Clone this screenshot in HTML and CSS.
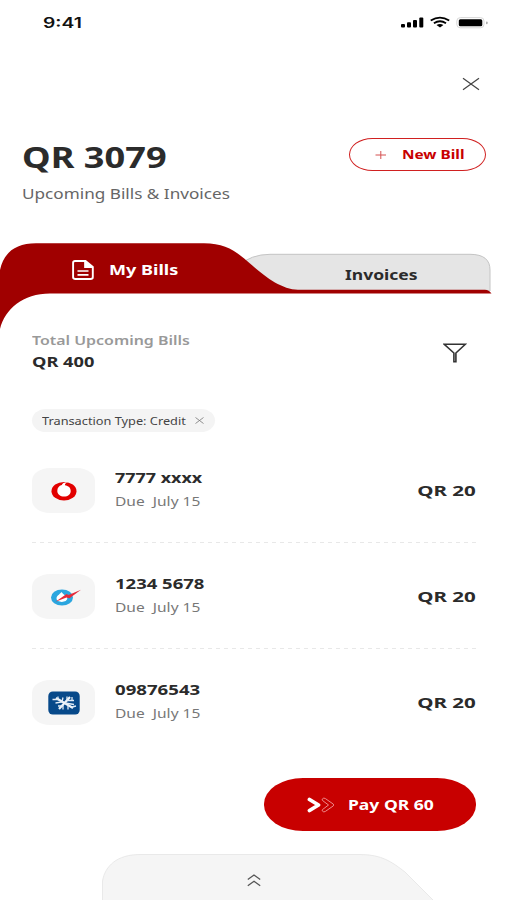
FILE: index.html
```html
<!DOCTYPE html>
<html lang="en">
<head>
<meta charset="utf-8">
<title>Bills</title>
<link rel="stylesheet" href="styles.css">
</head>
<body>
<main class="app">
  <header class="status">
    <span class="t time">9:41</span>
    <svg class="status-icons" width="88" height="16" viewBox="0 0 88 16">
      <rect x="1" y="9" width="4" height="3.6" rx="1"/><rect x="7" y="7.2" width="4" height="5.4" rx="1"/><rect x="13" y="5" width="4" height="7.6" rx="1"/><rect x="19.3" y="2.6" width="4" height="10" rx="1"/>
      <path d="M30.7 5.6Q40 -.2 49.2 5.6M33.9 8.2Q40 4.3 46 8.2" fill="none" stroke="#000" stroke-width="1.8"/>
      <path d="M36.5 10.1Q40 7.9 43.4 10.1L40 12.5Z"/>
      <rect x="56.8" y="2.6" width="27.2" height="10.2" rx="3.5" fill="#fff" stroke="#d8d8d8"/>
      <rect x="58.8" y="4.2" width="23.5" height="7.1" rx="1.5"/><rect x="86" y="6.5" width="1.6" height="2.8" rx=".8" fill="#aaa"/>
    </svg>
  </header>
  <div class="close">
    <svg width="18" height="14" viewBox="0 0 18 14"><path d="M1 1.2L17 12.8M17 1.2L1 12.8" fill="none" stroke="#444" stroke-width="1.2"/></svg>
  </div>
  <section class="summary">
    <div>
      <h1 class="t total">QR 3079</h1>
      <p class="t subtitle">Upcoming Bills &amp; Invoices</p>
    </div>
    <button class="new-bill">
      <svg width="12" height="8" viewBox="0 0 12 8"><path d="M.5 4H11M5.800 0V8" fill="none" stroke="#d45050"/></svg>
      <span class="t new-label">New Bill</span>
    </button>
  </section>
  <nav class="tabs">
    <svg class="tabs-shape" width="507" height="88" viewBox="0 0 507 88">
      <path d="M238 48V23Q251 11.300 270 11.300H470C484 11.300 490 17 490 27V48Z" fill="#e5e5e5" stroke="#c4c4c4"/>
      <path d="M0 27C4 9 16 .3 36 .3H204C226 .3 237 9 250 20.500C263 32 281 46.700 298 46.700H485Q489 46.700 491.500 50.500H50C23 50.500 5 66 0 86Z" fill="#a00000"/>
    </svg>
    <a class="tab tab-bills">
      <svg width="22" height="20" viewBox="0 0 22 20"><path d="M3 1H13.500L20.800 7V17.300Q20.800 19 18.500 19H3.300Q1.100 19 1.100 17.300V2.700Q1.100 1 3 1Z" fill="none" stroke="#fff" stroke-width="1.900"/><path d="M13 1L20.800 7.200H13Z" fill="#fff"/><path d="M13 1V7.200H20.500M5.500 11H16.500M5.500 14.800H16.500" fill="none" stroke="#fff" stroke-width="1.700"/></svg>
      <span class="t bills-label">My Bills</span>
    </a>
    <a class="tab tab-invoices"><span class="t inv-label">Invoices</span></a>
  </nav>
  <section class="upcoming">
    <div>
      <p class="t up-label">Total Upcoming Bills</p>
      <p class="t up-value">QR 400</p>
    </div>
    <svg class="filter" width="24" height="20" viewBox="0 0 24 20"><path d="M1.300 1.300H22.300L12.900 10V18.700H10.900V10Z" fill="none" stroke="#333" stroke-width="1.600"/></svg>
  </section>
  <div class="chip">
    <span class="t chip-label">Transaction Type: Credit</span>
    <svg width="9" height="7" viewBox="0 0 9 7"><path d="M.5 .5L8.500 6.500M8.500 .5L.5 6.500" fill="none" stroke="#777" stroke-width=".8"/></svg>
  </div>
  <ul class="bills">
    <li class="bill">
      <span class="logo">
        <svg width="26" height="20" viewBox="0 0 26 20"><ellipse cx="13" cy="10.200" rx="12.500" ry="9.300" fill="#e20000"/><path d="M16.500 1.200C13 1.300 11.200 2.500 10.800 4C7.800 4.800 6.300 7 6.300 9.900C6.300 13.400 9.500 15.500 13 15.500C17 15.500 19.700 13.300 19.700 9.900C19.700 6.800 17.300 4.900 13.900 4.300C13.900 2.900 14.800 1.900 16.500 1.200Z" fill="#fff"/></svg>
      </span>
      <div class="info"><p class="t name n1">7777 xxxx</p><p class="t due">Due&nbsp; July 15</p></div>
      <span class="t amount">QR 20</span>
    </li>
    <li class="bill">
      <span class="logo">
        <svg class="water" width="32" height="18" viewBox="0 0 32 18"><ellipse cx="12" cy="9.500" rx="11" ry="8" fill="#2ba6df"/><path d="M11.500 4C9.200 6.800 6.500 8 6.500 10.600C6.500 12.800 8.800 13.900 11.800 13.900S17.300 12.500 17.300 10.300C17.300 8 13.500 7 11.500 4Z" fill="#fff"/><path d="M5.500 13.800L16.500 6L18.500 7L31 1.700L19.500 10.200L16.500 9.400Z" fill="#e52b3a"/></svg>
      </span>
      <div class="info"><p class="t name n2">1234 5678</p><p class="t due">Due&nbsp; July 15</p></div>
      <span class="t amount">QR 20</span>
    </li>
    <li class="bill">
      <span class="logo">
        <svg width="32" height="24" viewBox="0 0 32 24"><rect x=".3" y=".5" width="31.400" height="23" rx="4.500" fill="#07498a"/><path d="M8 7L25 17M11 18L22 6" fill="none" stroke="#f0f5fa" stroke-width="2.200"/><path d="M4.500 8.500H10V5.500M7.500 12L14 11L15 6.500M19 5.500V9.500H26M10 15H15V18.500M17 12L26 13.500M20 14V18.500M24 16L28 15M24 6V9" fill="none" stroke="#e1ebf5" stroke-width="1.300"/></svg>
      </span>
      <div class="info"><p class="t name n3">09876543</p><p class="t due">Due&nbsp; July 15</p></div>
      <span class="t amount">QR 20</span>
    </li>
  </ul>
  <button class="pay">
    <svg width="28" height="16" viewBox="0 0 28 16"><path d="M2.500 2.500L11.500 8L2.500 13.500" fill="none" stroke="#fff" stroke-width="3.800" stroke-linecap="round" stroke-linejoin="round"/><path d="M15.200 2.200Q16.800 .2 18.400 1.600L26.300 7.100Q27 8 26.300 8.900L18.400 14.400Q16.800 15.800 15.200 13.800Q14.800 12.900 16 12.200L21.500 8L16 3.900Q14.800 3.100 15.200 2.200Z" fill="none" stroke="#f29a9a" stroke-width=".9"/></svg>
    <span class="t pay-label">Pay QR 60</span>
  </button>
  <footer class="drawer">
    <svg width="333" height="47" viewBox="0 0 333 47"><path d="M.5 47V27C3 12 15 .5 38 .5H258C280 .5 290 8 303 18L332 47Z" fill="#f5f5f5" stroke="#e5e5e5" stroke-width=".8"/><path d="M145.800 25.500L152 21L158.200 25.500M145.800 31.700L152 27.200L158.200 31.700" fill="none" stroke="#555" stroke-width="1.300"/></svg>
  </footer>
</main>
</body>
</html>
```
FILE: styles.css
```css
* { box-sizing: border-box; margin: 0; padding: 0; }
body { background: #fff; color: #2b2b2b; font-family: "Noto Sans", "Open Sans", sans-serif; }
svg { display: block; flex: none; }
button { border: 0; font: inherit; }
.app { width: 507px; height: 900px; overflow: hidden; display: flex; flex-direction: column; }
.t { display: block; width: max-content; white-space: nowrap; transform-origin: left center; transform: scaleX(var(--sx, 1.25)); }
.status { height: 45px; padding: 0 19px 0 43px; display: flex; justify-content: space-between; align-items: center; flex: none; }
.time { font: 600 14.5px/20px "Inter", sans-serif; color: #111; --sx: 1.33; }
.status-icons { margin-top: 1px; }
.close { height: 93px; padding: 32px 27px 0 0; display: flex; justify-content: flex-end; flex: none; }
.summary { height: 105px; padding: 0 21px 0 22px; display: flex; justify-content: space-between; align-items: flex-start; flex: none; }
.total { font-size: 28.5px; line-height: 38px; font-weight: 700; --sx: 1.27; }
.subtitle { margin-top: 8px; font-size: 14px; line-height: 20px; color: #666; --sx: 1.225; }
.new-bill { width: 137px; height: 33px; border: 1.3px solid #d02020; border-radius: 24px / 17px; background: #fff; display: flex; align-items: center; gap: 15px; padding-left: 25px; color: #c80000; }
.new-label { font-size: 12.5px; font-weight: 700; line-height: 18px; --sx: 1.23; }
.tabs { position: relative; height: 88px; display: flex; flex: none; }
.tabs-shape { position: absolute; left: 0; top: 0; }
.tab { position: relative; display: flex; align-items: center; font-weight: 700; font-size: 14px; line-height: 20px; }
.tab-bills { width: 250px; height: 53px; padding-left: 72px; gap: 15px; color: #fff; --sx: 1.29; }
.tab-invoices { height: 64px; padding-left: 95px; }
.upcoming { height: 78px; padding: 0 40px 0 32px; display: flex; justify-content: space-between; flex: none; }
.up-label { font-size: 13px; line-height: 18px; font-weight: 600; color: #999; --sx: 1.225; }
.up-value { margin-top: 4px; font-size: 13.5px; line-height: 18px; font-weight: 700; --sx: 1.35; }
.filter { margin-top: 12px; }
.chip { width: 183px; height: 23px; margin-left: 32px; border-radius: 14px / 11.5px; background: #f4f4f4; display: flex; align-items: center; justify-content: space-between; padding: 0 11px 0 10px; flex: none; }
.chip-label { font-size: 10.5px; line-height: 16px; color: #444; --sx: 1.215; }
.bills { list-style: none; margin: 6px 31px 0 32px; height: 318px; flex: none; }
.bill { height: 106px; padding-bottom: 1px; display: flex; align-items: center; background: repeating-linear-gradient(90deg, #e8e8e8 0 4px, transparent 4px 8px) left bottom 1px / 100% 1px no-repeat; }
.bill:last-child { background: none; }
.logo { width: 63px; height: 45px; border-radius: 18px / 13px; background: #f5f5f5; display: flex; align-items: center; justify-content: center; flex: none; }
.water { margin-left: 5px; }
.info { flex: 1; padding: 0 0 3px 20px; }
.name { font-size: 14px; line-height: 22px; font-weight: 700; }
.n1 { --sx: 1.28; }
.n2 { --sx: 1.32; }
.n3 { --sx: 1.33; }
.due { margin-top: 2px; font-size: 13px; line-height: 20px; color: #777; --sx: 1.195; }
.amount { margin-bottom: 2px; font-size: 15px; line-height: 20px; font-weight: 700; transform-origin: right center; --sx: 1.37; }
.pay { align-self: flex-end; width: 212px; height: 53px; margin: 22px 31px 0 0; border-radius: 39px / 26px; background: #c80000; color: #fff; display: flex; align-items: center; padding-left: 43px; gap: 13px; flex: none; }
.pay-label { font-size: 14px; line-height: 20px; font-weight: 700; }
.drawer { margin: 23px 0 0 102px; height: 47px; flex: none; }
```
